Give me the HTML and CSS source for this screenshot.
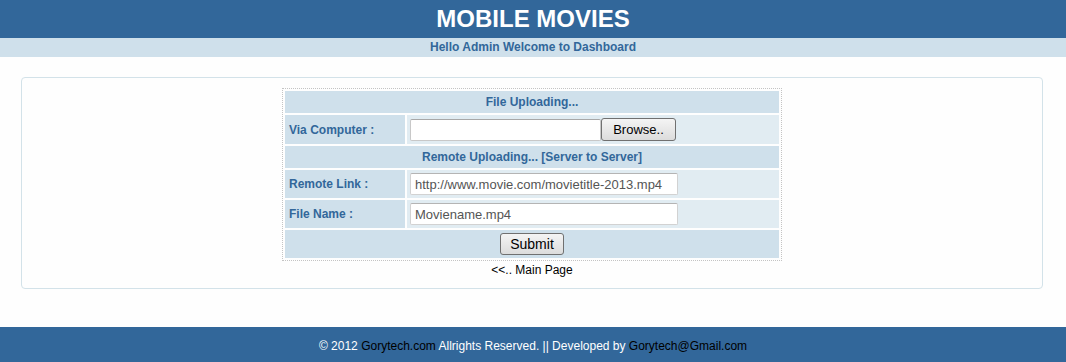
FILE: index.html
```html
<!DOCTYPE html>
<html lang="en">
<head>
    <meta charset="UTF-8">
    <title>Mobile Movies - Upload</title>
    <link rel="stylesheet" href="styles.css">
</head>
<body>
    <div class="header">
        <h1>MOBILE MOVIES</h1>
    </div>
    <div class="welcome">Hello Admin Welcome to Dashboard</div>

    <div class="content">
        <form class="upload-form">
            <table class="upload-table">
                <tr>
                    <th colspan="2">File Uploading...</th>
                </tr>
                <tr>
                    <td class="label">Via Computer :</td>
                    <td class="value">
                        <span class="file-box">
                            <input type="text" class="file-name" readonly>
                            <button type="button" class="button browse-button">Browse..</button>
                        </span>
                    </td>
                </tr>
                <tr>
                    <th colspan="2">Remote Uploading... [Server to Server]</th>
                </tr>
                <tr>
                    <td class="label">Remote Link :</td>
                    <td class="value"><input type="text" class="text-input" value="http://www.movie.com/movietitle-2013.mp4"></td>
                </tr>
                <tr>
                    <td class="label">File Name :</td>
                    <td class="value"><input type="text" class="text-input" value="Moviename.mp4"></td>
                </tr>
                <tr>
                    <th colspan="2"><button type="submit" class="button submit-button">Submit</button></th>
                </tr>
            </table>
        </form>
        <a href="#" class="main-link">&lt;&lt;.. Main Page</a>
    </div>

    <div class="footer">
        &copy; 2012 <a href="#">Gorytech.com</a> Allrights Reserved. || Developed by <a href="#">Gorytech@Gmail.com</a>
    </div>
</body>
</html>
```

FILE: styles.css
```css
* {
    margin: 0;
    padding: 0;
    box-sizing: border-box;
}

body {
    background-color: #fefefe;
    font-family: "Liberation Sans", Arial, sans-serif;
    font-size: 12px;
}

.header {
    background-color: #32679a;
    height: 38px;
}

.header h1 {
    color: #ffffff;
    font-size: 24px;
    line-height: 38px;
    text-align: center;
    font-weight: bold;
}

.welcome {
    background-color: #cfe0eb;
    color: #32679a;
    font-weight: bold;
    height: 19px;
    line-height: 19px;
    text-align: center;
}

.content {
    margin: 20px 23px 0 21px;
    padding: 10px 0 11px;
    border: 1px solid #d3e2e9;
    border-radius: 4px;
    text-align: center;
}

.upload-table {
    width: 500px;
    margin: 0 auto;
    border: 1px dotted #c4c4c4;
    border-spacing: 2px;
}

.upload-table th {
    background-color: #cfe0eb;
    color: #32679a;
    font-weight: bold;
    height: 22px;
    padding: 3px;
    text-align: center;
}

.upload-table .label {
    width: 120px;
    background-color: #cfe0eb;
    color: #32679a;
    font-weight: bold;
    text-align: left;
    padding: 3px 4px;
}

.upload-table .value {
    background-color: #e1ecf2;
    text-align: left;
    padding: 3px;
}

.file-box {
    display: flex;
    align-items: center;
}

.file-name {
    width: 191px;
    height: 22px;
    border: 1px solid #c8c8c8;
    border-top-color: #a8a8a8;
    border-radius: 2px;
    background: #ffffff;
}

.text-input {
    display: block;
    width: 268px;
    height: 22px;
    padding: 0 4px;
    border: 1px solid #d2d2d2;
    border-top-color: #b4b4b4;
    border-radius: 2px;
    background: #ffffff;
    color: #555555;
    font-family: "Liberation Sans", Arial, sans-serif;
    font-size: 13px;
}

.button {
    height: 23px;
    padding: 0;
    border: 1px solid #707070;
    border-radius: 3px;
    background: linear-gradient(#f4f4f4, #dcdcdc);
    color: #000000;
    font-family: "Liberation Sans", Arial, sans-serif;
    font-size: 13px;
    cursor: pointer;
}

.browse-button {
    width: 75px;
}

.submit-button {
    width: 64px;
    height: 22px;
    font-size: 14px;
}

.main-link {
    display: inline-block;
    margin-top: 2px;
    color: #000000;
    text-decoration: none;
    font-size: 12px;
}

.footer {
    margin-top: 38px;
    background-color: #32679a;
    color: #ffffff;
    height: 35px;
    line-height: 38px;
    text-align: center;
}

.footer a {
    color: #000000;
    text-decoration: none;
}
```
